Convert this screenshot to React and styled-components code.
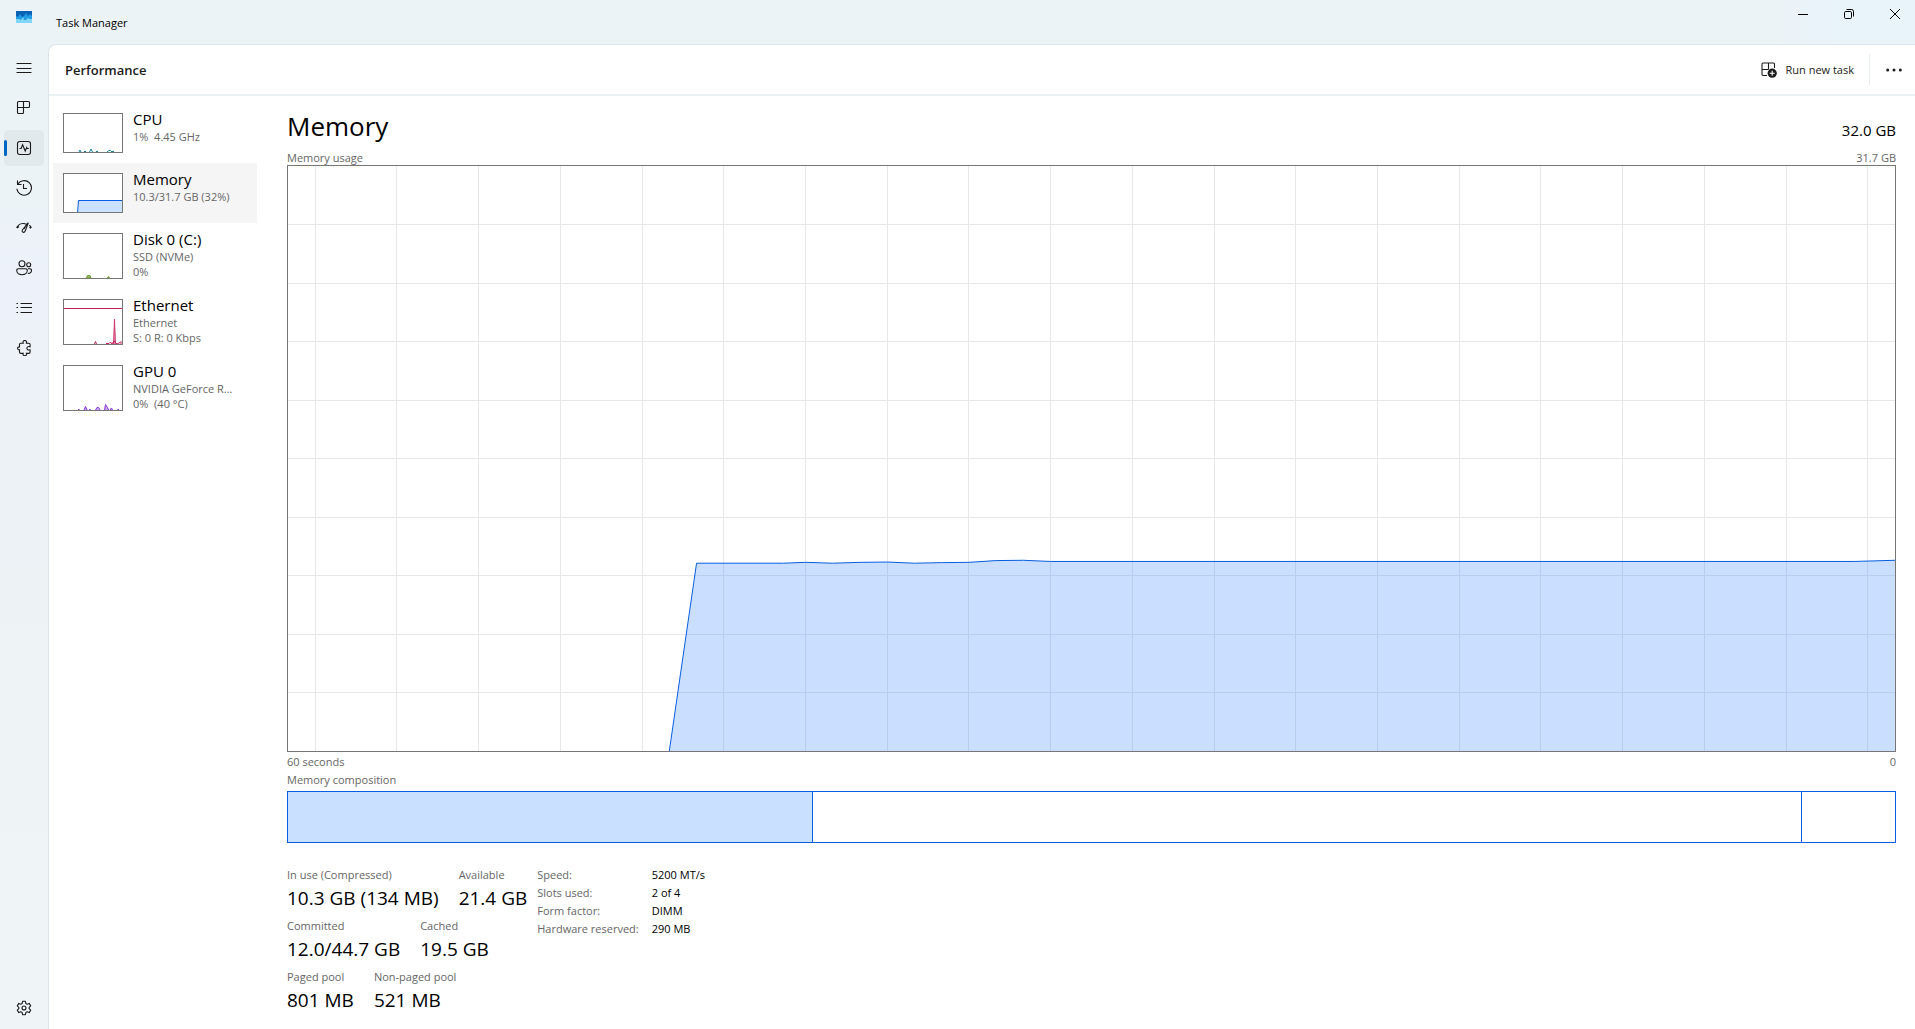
import React from "react";
import styled, { createGlobalStyle } from "styled-components";

const GlobalStyle = createGlobalStyle`
  *, *::before, *::after { box-sizing: border-box; }
  body {
    margin: 0;
    font-family: "Open Sans", "Noto Sans", sans-serif;
    font-size: 11px;
    line-height: 15px;
    color: #000;
    background: #edf3f6;
  }
  button {
    font: inherit;
    color: inherit;
    background: none;
    border: 0;
    padding: 0;
    cursor: default;
  }
  h1, h2, h3, p, dl, dd, dt, ul { margin: 0; padding: 0; font-weight: 400; }
  svg { display: block; }
`;

const Window = styled.div`
  display: flex;
  min-height: 100vh;
  background: linear-gradient(180deg, #ebf3f6 0, #ecf3f7 20%, #edf2fa 27%, #edf2f6 45%, #eff4f6 100%);
`;

const Rail = styled.nav`
  flex: none;
  width: 48px;
  display: flex;
  flex-direction: column;
  align-items: center;
  gap: 4px;
  padding: 11px 4px 3px;
`;

const Logo = styled.div`
  height: 35px;
`;

const RailButton = styled.button`
  flex: none;
  width: 40px;
  height: 36px;
  display: flex;
  align-items: center;
  border-radius: 4px;
  background: ${(p) => (p.$active ? "#e2e9ec" : "transparent")};

  &::before {
    content: "";
    width: 3px;
    height: 16px;
    margin-right: 9px;
    border-radius: 2px;
    background: ${(p) => (p.$active ? "#0067c0" : "transparent")};
  }
`;

const RailSpacer = styled.div`
  flex: 1;
`;

const Frame = styled.div`
  flex: 1;
  min-width: 0;
  display: flex;
  flex-direction: column;
`;

const TitleBar = styled.header`
  flex: none;
  height: 44px;
  display: flex;
  justify-content: space-between;
  padding: 0 5px 0 8px;
  background: linear-gradient(90deg, #ebf3f6 0, #ebf3f6 92%, #e9f3fa 96%);
`;

const AppTitle = styled.h1`
  padding-top: 15px;
  font-size: 11px;
  line-height: 16px;
`;

const Captions = styled.div`
  display: flex;
  gap: 16px;
`;

const CaptionButton = styled.button`
  width: 30px;
  height: 28px;
  display: flex;
  align-items: center;
  justify-content: center;
`;

const Panel = styled.div`
  flex: 1;
  min-height: 0;
  display: flex;
  flex-direction: column;
  background: #fff;
  border: solid #dde5ea;
  border-width: 1px 0 0 1px;
  border-top-left-radius: 8px;
`;

const Toolbar = styled.div`
  flex: none;
  height: 51px;
  display: flex;
  align-items: center;
  justify-content: space-between;
  padding: 0 9px 0 16px;
  border-bottom: 2px solid #ebf0f3;
`;

const ToolbarTitle = styled.h2`
  font-size: 13px;
  line-height: 18px;
  font-weight: 600;
  color: #1b1b1b;
`;

const Actions = styled.div`
  display: flex;
  align-items: center;
`;

const TaskButton = styled.button`
  display: flex;
  align-items: center;
  gap: 9px;
  padding-right: 15px;
  line-height: 16px;
  color: #1b1b1b;
`;

const Divider = styled.div`
  width: 1px;
  height: 31px;
  background: #e6ebed;
`;

const MoreButton = styled.button`
  width: 24px;
  height: 32px;
  margin-left: 12px;
  display: flex;
  align-items: center;
  justify-content: center;
`;

const Body = styled.div`
  flex: 1;
  display: flex;
  min-height: 0;
`;

const Devices = styled.ul`
  flex: none;
  width: 208px;
  padding: 7px 0 0 4px;
  list-style: none;
`;

const DeviceButton = styled.button`
  width: 100%;
  height: ${(p) => (p.$tall ? "66px" : "60px")};
  display: flex;
  align-items: flex-start;
  gap: 10px;
  padding: 8px 10px;
  text-align: left;
  background: ${(p) => (p.$active ? "#f5f5f5" : "transparent")};
`;

const Thumb = styled.span`
  flex: none;
  width: 60px;
  height: ${(p) => (p.$tall ? "46px" : "40px")};
  margin-top: 2px;
  border: 1px solid #767676;
  background: #fff;
`;

const DeviceText = styled.span`
  min-width: 0;
  display: flex;
  flex-direction: column;
  white-space: pre;
  color: #666;
`;

const DeviceName = styled.span`
  font-size: 15px;
  line-height: 16px;
  padding-bottom: 2px;
  color: #000;
`;

const Main = styled.main`
  flex: 1;
  min-width: 0;
  display: flex;
  flex-direction: column;
  padding: 11px 19px 10px 30px;
`;

const SplitRow = styled.div`
  display: flex;
  justify-content: space-between;
  align-items: baseline;
  line-height: ${(p) => p.$line || 15}px;
  color: ${(p) => p.$color || "#666"};
`;

const Heading = styled.h2`
  font-size: 26px;
  line-height: 39px;
`;

const Capacity = styled.span`
  font-size: 15px;
`;

const Chart = styled.div`
  flex: 1;
  min-height: 200px;
  position: relative;
  border: 1px solid #767676;
  margin-bottom: 2px;
`;

const ChartSvg = styled.svg`
  position: absolute;
  inset: 0;
  width: 100%;
  height: 100%;
`;

const Caption = styled.p`
  padding: 3px 0;
  line-height: 16px;
  color: #666;
`;

const Composition = styled.div`
  flex: none;
  height: 52px;
  display: flex;
  border: 1px solid #085ee0;
`;

const Segment = styled.div`
  flex: ${(p) => p.$share} 0 0;
  background: ${(p) => (p.$filled ? "#cae0ff" : "#fff")};
  & + & { border-left: 1px solid #085ee0; }
`;

const Stats = styled.div`
  display: flex;
  align-items: flex-start;
  gap: 10px;
  padding-top: 23px;
`;

const StatGrid = styled.dl`
  display: flex;
  flex-direction: column;
`;

const StatRow = styled.div`
  display: flex;
  gap: 20px;
  height: 51px;
`;

const StatLabel = styled.dt`
  line-height: 18px;
  color: #666;
`;

const StatValue = styled.dd`
  font-size: 19px;
  line-height: 28px;
  white-space: nowrap;
`;

const Specs = styled.dl`
  display: grid;
  grid-template-columns: auto auto;
  column-gap: 13px;
  line-height: 18px;
`;

const SpecLabel = styled.dt`
  color: #666;
`;

const railIcons = {
  menu: <path d="M.5 3.500h15M.5 8.500h15M.5 12.500h15" />,
  processes: <path d="M2.500 1.500h10a1 1 0 0 1 1 1v4a1 1 0 0 1-1 1H1.500M7.500 1.500v11a1 1 0 0 1-1 1H2.500a1 1 0 0 1-1-1V2.500a1 1 0 0 1 1-1" />,
  performance: (
    <>
      <rect x="1.500" y="1.500" width="13" height="13" rx="2.200" />
      <path d="M3.500 8.500h1.600l1.500-3.700 2.600 6.200 1.500-3.500.6 1h1.500" />
    </>
  ),
  history: <path d="M1.500.500v4h4M1.700 4.500A7.300 7.300 0 1 1 .9 8.800M7.500 4v4.500h3.500" />,
  startup: (
    <path d="M.5 7.700C2 5.200 4 3.700 6.500 3.500M1 8.100l2-1.600M6.500 3.500c1.500-.2 3 .2 4.500 1M13.300 5.200c.9.700 1.600 1.500 2.200 2.500M13.500 7.200l1.500 1M12.300 2.700 9.300 10.800c-.5 1.300-1.300 1.800-2.200 1.500-1-.4-1.200-1.300-.7-2.300zM10 5.300 8 9" />
  ),
  users: (
    <>
      <circle cx="6" cy="3.800" r="3" />
      <circle cx="12.700" cy="4.800" r="2" />
      <path d="M2.200 8.800h7.600a1.500 1.500 0 0 1 1.500 1.500c0 2.600-2.300 4.400-5.300 4.400S.7 12.900.7 10.300a1.500 1.500 0 0 1 1.500-1.500zM12 8.800h2a1.500 1.500 0 0 1 1.500 1.500c0 2.100-1.400 3.200-3.700 3.200" />
    </>
  ),
  details: <path d="M4.500 3.500H16M4.500 7.500H16M4.500 12.500H16M.5 3.500H2M.5 7.500H2M.5 12.500H2" />,
  services: (
    <path transform="translate(.8 0)" d="M4 3.200h2.400C5.800 1.600 6.700.5 8 .5s2.200 1.100 1.600 2.700H12a1.300 1.300 0 0 1 1.300 1.300v2.200c-2.400-.6-3.200.5-3.200 1.600s.8 2.200 3.200 1.600v2.200a1.300 1.300 0 0 1-1.300 1.300H9.600c.6 1.400-.3 2.300-1.600 2.300s-2.200-.9-1.600-2.300H4a1.300 1.300 0 0 1-1.300-1.300V9.800C1.400 9.900.8 9.200.8 8.300S1.400 6.800 2.700 6.900V4.500A1.300 1.300 0 0 1 4 3.200z" />
  ),
  settings: (
    <>
      <circle cx="8" cy="8" r="2" />
      <path d="M6.600 1.300h2.800l.4 2.100 1.300.8 2.100-.8 1.500 2.500L13.200 7.300v1.400l1.500 1.400-1.500 2.500-2.100-.8-1.300.8-.4 2.100H6.600l-.4-2.100-1.300-.8-2.100.8-1.500-2.500 1.500-1.400V7.300L1.300 5.900l1.500-2.500 2.100.8 1.300-.8z" strokeLinejoin="round" />
    </>
  ),
};

function Icon({ name }) {
  return (
    <svg width="16" height="16" viewBox="0 0 16 16" fill="none" stroke="#1b1b1b" strokeWidth="1.1" aria-hidden="true">
      {railIcons[name]}
    </svg>
  );
}

const railItems = [
  ["menu", "Navigation"],
  ["processes", "Processes"],
  ["performance", "Performance"],
  ["history", "App history"],
  ["startup", "Startup apps"],
  ["users", "Users"],
  ["details", "Details"],
  ["services", "Services"],
];

function CpuGraph() {
  return (
    <svg width="58" height="38" aria-hidden="true">
      <path d="M15 38l1-2 1 2M20 38l1-1 1 1M25.500 38l1.500-3 1.500 3M32 38l1-1 1 1M43 38l2-1.500h1.500l1.500 1.500 1-1 1 1" fill="none" stroke="#1a7f9c" />
    </svg>
  );
}

function MemoryThumb() {
  return (
    <svg width="58" height="38" aria-hidden="true">
      <path d="M13.500 39L14.500 26.500H59V39z" fill="#cae0ff" stroke="#085ee0" />
    </svg>
  );
}

function DiskGraph() {
  return (
    <svg width="58" height="44" aria-hidden="true">
      <path d="M22.500 44l1-2.500h2.500l1 2.500zM43.500 44l1-1.500 1 1.500z" fill="#9abf63" stroke="#6a9a2b" />
    </svg>
  );
}

function EthernetGraph() {
  return (
    <svg width="58" height="44" aria-hidden="true">
      <path d="M49 44l1.500-25.500L52 44z" fill="#e48aaa" />
      <path d="M0 8.500h58" stroke="#c4225c" />
      <path d="M49.500 44l1-25 1 25" fill="none" stroke="#c4225c" strokeWidth=".7" />
      <path d="M30.500 44l1-2.500 1 2.500M42 43.500h3l1.500-1.500 1.500 2 2-3 3 3 2-1 1-.5 1-1v2.500" fill="none" stroke="#c4225c" />
    </svg>
  );
}

function GpuGraph() {
  return (
    <svg width="58" height="44" aria-hidden="true">
      <path d="M14 43.500h1.500M20 44l1.500-3.500 1.500 3.500M25 43.500h1.500M31.500 44l1.500-2.500h1.500l1.500 2.500M40.500 44l1-5.500 2 3 1 2.500M46 44l1.500-2 1 2M53.500 43.500h1.500" fill="#c9a5f3" stroke="#8a35e0" />
    </svg>
  );
}

const devices = [
  { name: "CPU", lines: ["1%  4.45 GHz"], graph: <CpuGraph /> },
  { name: "Memory", lines: ["10.3/31.7 GB (32%)"], graph: <MemoryThumb />, active: true },
  { name: "Disk 0 (C:)", lines: ["SSD (NVMe)", "0%"], graph: <DiskGraph />, tall: true },
  { name: "Ethernet", lines: ["Ethernet", "S: 0 R: 0 Kbps"], graph: <EthernetGraph />, tall: true },
  { name: "GPU 0", lines: ["NVIDIA GeForce R...", "0%  (40 °C)"], graph: <GpuGraph />, tall: true },
];

// Usage samples as [seconds from the left edge, percent of capacity].
const samples = [
  [15, 32.1], [18.2, 32.1], [19, 32.25], [20, 32.1], [21, 32.25], [22, 32.3],
  [23, 32.1], [24, 32.2], [25, 32.25], [26, 32.55], [27, 32.6], [28, 32.4],
  [57.5, 32.4], [59, 32.6],
];

function UsageChart() {
  const line = samples.map(([x, v]) => `L${x} ${100 - v}`).join("");
  const columns = Array.from({ length: 20 }, (_, i) => 1 + i * 3);
  const rows = Array.from({ length: 9 }, (_, i) => (i + 1) * 10);
  return (
    <ChartSvg viewBox="0 0 59 100" preserveAspectRatio="none" role="img" aria-label="Memory usage over 60 seconds">
      <g stroke="#e8e8e8" shapeRendering="crispEdges">
        {columns.map((x) => (
          <line key={x} x1={x} x2={x} y1="0" y2="100" vectorEffect="non-scaling-stroke" />
        ))}
        {rows.map((y) => (
          <line key={y} x1="0" x2="59" y1={y} y2={y} vectorEffect="non-scaling-stroke" />
        ))}
      </g>
      <path d={`M14 100${line}V100z`} fill="#0a6cff" fillOpacity="0.215" />
      <path d={`M14 100${line}`} fill="none" stroke="#085ee0" vectorEffect="non-scaling-stroke" />
    </ChartSvg>
  );
}

const stats = [
  [["In use (Compressed)", "10.3 GB (134 MB)"], ["Available", "21.4 GB"]],
  [["Committed", "12.0/44.7 GB"], ["Cached", "19.5 GB"]],
  [["Paged pool", "801 MB"], ["Non-paged pool", "521 MB"]],
];

const specs = [
  ["Speed:", "5200 MT/s"],
  ["Slots used:", "2 of 4"],
  ["Form factor:", "DIMM"],
  ["Hardware reserved:", "290 MB"],
];

export default function App() {
  return (
    <>
      <GlobalStyle />
      <Window>
        <Rail aria-label="Sections">
          <Logo>
            <svg width="16" height="12" viewBox="0 0 16 12" aria-hidden="true">
              <rect width="16" height="12" fill="#0b62b5" />
              <path d="M0 5l2 1 2-3 2 3 2-1 2-3 2 3 2-2 2 2v7H0z" fill="#1f9ce4" />
              <path d="M0 8h3l2 1 2-3 1 3h2l2-2 2 1h2v4H0z" fill="#7fd6fa" />
            </svg>
          </Logo>
          {railItems.map(([name, label]) => (
            <RailButton key={name} $active={name === "performance"} aria-label={label}>
              <Icon name={name} />
            </RailButton>
          ))}
          <RailSpacer />
          <RailButton aria-label="Settings">
            <Icon name="settings" />
          </RailButton>
        </Rail>
        <Frame>
          <TitleBar>
            <AppTitle>Task Manager</AppTitle>
            <Captions>
              <CaptionButton aria-label="Minimize">
                <svg width="10" height="10" stroke="#000"><path d="M0 5.500h10" /></svg>
              </CaptionButton>
              <CaptionButton aria-label="Restore">
                <svg width="10" height="10" fill="none" stroke="#000">
                  <rect x=".5" y="2.500" width="7" height="7" rx="1.200" />
                  <path d="M2.500.5h5a2 2 0 0 1 2 2v5" />
                </svg>
              </CaptionButton>
              <CaptionButton aria-label="Close">
                <svg width="10" height="10" stroke="#000"><path d="M0 0l10 10M10 0L0 10" /></svg>
              </CaptionButton>
            </Captions>
          </TitleBar>
          <Panel>
            <Toolbar>
              <ToolbarTitle>Performance</ToolbarTitle>
              <Actions>
                <TaskButton>
                  <svg width="16" height="16" viewBox="0 0 16 16" fill="none" stroke="#1b1b1b" strokeWidth="1.1" aria-hidden="true">
                    <path d="M6 13.500H2a1 1 0 0 1-1-1V2a1 1 0 0 1 1-1h10.500a1 1 0 0 1 1 1v4M1 7.500h6.500M7.500 1v6.500" />
                    <circle cx="11.200" cy="11.200" r="4.600" fill="#1b1b1b" stroke="none" />
                    <path d="M11.200 8.700v5M8.700 11.200h5" stroke="#fff" />
                  </svg>
                  Run new task
                </TaskButton>
                <Divider />
                <MoreButton aria-label="More options">
                  <svg width="16" height="4" fill="#1b1b1b">
                    <circle cx="1.700" cy="2" r="1.500" />
                    <circle cx="8" cy="2" r="1.500" />
                    <circle cx="14.300" cy="2" r="1.500" />
                  </svg>
                </MoreButton>
              </Actions>
            </Toolbar>
            <Body>
              <Devices>
                {devices.map((d) => (
                  <li key={d.name}>
                    <DeviceButton $active={d.active} $tall={d.tall}>
                      <Thumb $tall={d.tall}>{d.graph}</Thumb>
                      <DeviceText>
                        <DeviceName>{d.name}</DeviceName>
                        {d.lines.map((t) => (
                          <span key={t}>{t}</span>
                        ))}
                      </DeviceText>
                    </DeviceButton>
                  </li>
                ))}
              </Devices>
              <Main>
                <SplitRow $line={39} $color="#000">
                  <Heading>Memory</Heading>
                  <Capacity>32.0 GB</Capacity>
                </SplitRow>
                <SplitRow>
                  <span>Memory usage</span>
                  <span>31.7 GB</span>
                </SplitRow>
                <Chart>
                  <UsageChart />
                </Chart>
                <SplitRow>
                  <span>60 seconds</span>
                  <span>0</span>
                </SplitRow>
                <Caption>Memory composition</Caption>
                <Composition role="img" aria-label="Memory composition">
                  <Segment $share={525} $filled />
                  <Segment $share={989} />
                  <Segment $share={93} />
                </Composition>
                <Stats>
                  <StatGrid>
                    {stats.map((row) => (
                      <StatRow key={row[0][0]}>
                        {row.map(([label, value]) => (
                          <div key={label}>
                            <StatLabel>{label}</StatLabel>
                            <StatValue>{value}</StatValue>
                          </div>
                        ))}
                      </StatRow>
                    ))}
                  </StatGrid>
                  <Specs>
                    {specs.map(([label, value]) => (
                      <React.Fragment key={label}>
                        <SpecLabel>{label}</SpecLabel>
                        <dd>{value}</dd>
                      </React.Fragment>
                    ))}
                  </Specs>
                </Stats>
              </Main>
            </Body>
          </Panel>
        </Frame>
      </Window>
    </>
  );
}
